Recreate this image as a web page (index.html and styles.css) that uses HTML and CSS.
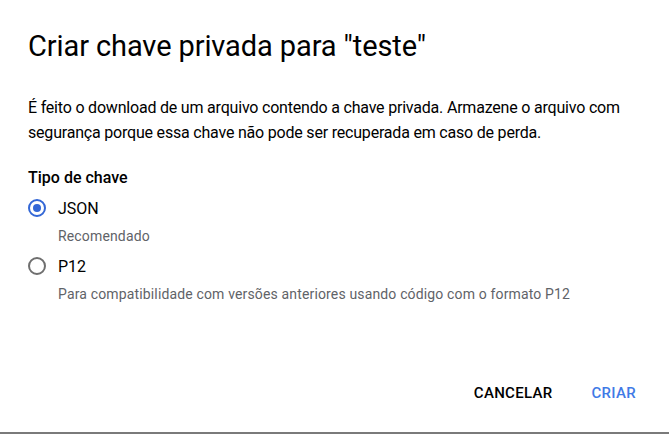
FILE: index.html
```html
<!DOCTYPE html>
<html lang="pt">
<head>
<meta charset="utf-8">
<link rel="stylesheet" href="styles.css">
</head>
<body>
<div class="dialog">
  <h1 class="title">Criar chave privada para "teste"</h1>
  <p class="desc">É feito o download de um arquivo contendo a chave privada. Armazene o arquivo com segurança porque essa chave não pode ser recuperada em caso de perda.</p>
  <div class="group-label">Tipo de chave</div>
  <div class="options">
    <div class="option">
      <div class="row"><span class="radio checked"></span><span class="opt-label">JSON</span></div>
      <div class="hint">Recomendado</div>
    </div>
    <div class="option">
      <div class="row"><span class="radio"></span><span class="opt-label">P12</span></div>
      <div class="hint">Para compatibilidade com versões anteriores usando código com o formato P12</div>
    </div>
  </div>
  <div class="actions">
    <button class="btn">CANCELAR</button>
    <button class="btn primary">CRIAR</button>
  </div>
</div>
</body>
</html>
```
FILE: styles.css
```css
html, body { margin: 0; padding: 0; }
body {
  width: 669px;
  height: 434px;
  background: #fff;
  font-family: Roboto, "Liberation Sans", sans-serif;
  color: #202124;
  overflow: hidden;
}
.dialog {
  box-sizing: border-box;
  height: 434px;
  border-bottom: 2px solid #7a7a7a;
  padding: 28px 28px 0 28px;
  display: flex;
  flex-direction: column;
}
.title {
  margin: 0;
  font-size: 29px;
  font-weight: 400;
  line-height: 36px;
  letter-spacing: -0.1px;
  color: #000;
}
.desc {
  margin: 31px 0 0 0;
  font-size: 16px;
  line-height: 25px;
  letter-spacing: -0.2px;
  color: #000;
}
.group-label {
  margin-top: 21px;
  font-size: 16px;
  font-weight: 500;
  line-height: 24px;
  color: #000;
}
.options { display: flex; flex-direction: column; gap: 8px; margin-top: 6px; }
.row { display: flex; align-items: center; gap: 12px; height: 24px; }
.radio {
  box-sizing: border-box;
  width: 18px; height: 18px;
  border: 2px solid #6f6f6f;
  border-radius: 50%;
  position: relative;
}
.radio.checked { border-color: #3367d6; }
.radio.checked::after {
  content: "";
  position: absolute;
  left: 3px; top: 3px;
  width: 8px; height: 8px;
  border-radius: 50%;
  background: #3367d6;
}
.opt-label { font-size: 16px; color: #000; }
.hint {
  margin-left: 30px;
  margin-top: 6px;
  font-size: 14px;
  line-height: 20px;
  letter-spacing: 0.15px;
  color: #5f6368;
}
.actions {
  margin-top: auto;
  margin-bottom: 22px;
  margin-right: -3px;
  display: flex;
  justify-content: flex-end;
  gap: 23px;
}
.btn {
  border: 0;
  background: transparent;
  font-family: Roboto, "Liberation Sans", sans-serif;
  font-size: 15px;
  font-weight: 500;
  letter-spacing: 0.3px;
  padding: 8px 8px;
  color: #000;
}
.btn.primary { color: #3f7ae6; }
```
